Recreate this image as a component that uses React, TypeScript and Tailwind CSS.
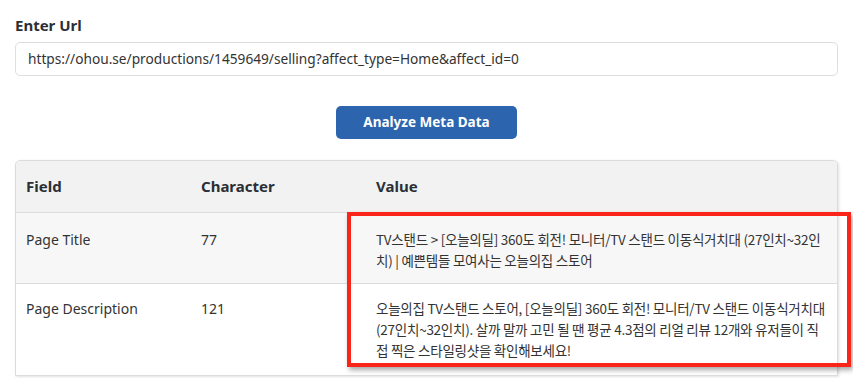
import React from "react";

const font = { fontFamily: '"Noto Sans", "Noto Sans CJK KR", sans-serif' };
const kfont = { fontFamily: '"Noto Sans CJK KR", "Noto Sans", sans-serif' };

export default function App() {
  return (
    <div
      className="relative w-[853px] h-[378px] overflow-hidden bg-white px-[15px] pt-[14px] text-[#333]"
      style={font}
    >
      <div className="text-[15px] font-bold leading-[22px] text-[#2b2f36]">Enter Url</div>
      <div className="mt-[6px] h-[34px] rounded-[5px] border border-[#dedede] bg-white pl-[12px] flex items-center text-[13.7px] text-[#333]">
        https://ohou.se/productions/1459649/selling?affect_type=Home&amp;affect_id=0
      </div>
      <div className="mt-[30px] flex justify-center">
        <button className="h-[33px] w-[181px] rounded-[5px] bg-[#2c64ad] text-[13.5px] font-bold text-white">
          Analyze Meta Data
        </button>
      </div>
      <div className="mt-[21px] rounded-tl-[5px] rounded-tr-[5px] border border-[#dcdcdc] shadow-[1px_1px_3px_rgba(0,0,0,0.12)]">
        <div className="grid grid-cols-[175px_175px_1fr] h-[52px] items-center bg-[#f2f2f2] border-b border-[#dcdcdc] text-[15px] font-bold text-[#2b2f36] rounded-t-[5px]">
          <div className="pl-[10px]">Field</div>
          <div className="pl-[10px]">Character</div>
          <div className="pl-[10px]">Value</div>
        </div>
        <div className="grid grid-cols-[175px_175px_1fr] bg-[#f7f7f7] border-b border-[#dcdcdc] text-[14px] leading-[21px] pt-[16px] pb-[12px]">
          <div className="pl-[10px]">Page Title</div>
          <div className="pl-[10px]">77</div>
          <div className="pl-[10px] whitespace-nowrap text-[13.5px] tracking-[-0.25px]" style={kfont}>
            <div>TV스탠드 &gt; [오늘의딜] 360도 회전! 모니터/TV 스탠드 이동식거치대 (27인치~32인</div>
            <div>치) | 예쁜템들 모여사는 오늘의집 스토어</div>
          </div>
        </div>
        <div className="grid grid-cols-[175px_175px_1fr] bg-white text-[14px] leading-[21px] pt-[14px] pb-[14px]">
          <div className="pl-[10px]">Page Description</div>
          <div className="pl-[10px]">121</div>
          <div className="pl-[10px] whitespace-nowrap text-[13.5px] tracking-[-0.25px]" style={kfont}>
            <div>오늘의집 TV스탠드 스토어, [오늘의딜] 360도 회전! 모니터/TV 스탠드 이동식거치대</div>
            <div>(27인치~32인치). 살까 말까 고민 될 땐 평균 4.3점의 리얼 리뷰 12개와 유저들이 직</div>
            <div>접 찍은 스타일링샷을 확인해보세요!</div>
          </div>
        </div>
      </div>
      <div className="absolute left-[347px] top-[212px] w-[504px] h-[155px] border-[4px] border-[#fb2419] shadow-[2px_3px_5px_rgba(0,0,0,0.35)] pointer-events-none" />
    </div>
  );
}
